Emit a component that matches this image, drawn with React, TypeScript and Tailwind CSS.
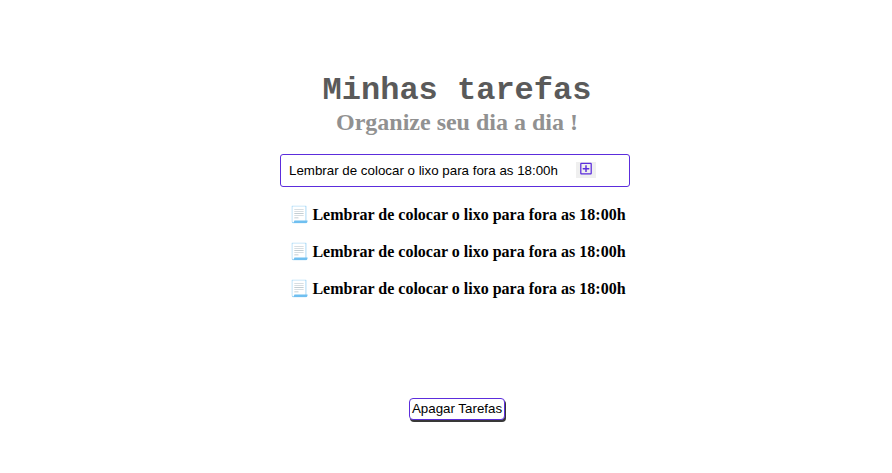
import { FaRegPlusSquare } from "react-icons/fa";

const task = "Lembrar de colocar o lixo para fora as 18:00h";

export default function App() {
  return (
    <div className="h-[473px] bg-white flex flex-col items-center pl-[22px] pt-[73px] font-['Liberation_Serif',serif] text-black">
      <h1 className="font-['Liberation_Mono',monospace] font-bold text-[32px] leading-[36px] text-[#5a5a5a]">Minhas tarefas</h1>
      <h2 className="font-bold text-[24px] leading-[27px] text-[#919191]">Organize seu dia a dia !</h2>
      <form className="mt-[18px] mr-1 flex h-[33px] w-[350px] items-center rounded-[3px] border border-[#5c2ddc] pl-2">
        <input className="w-[287px] font-['Liberation_Sans',sans-serif] text-[13.333px] leading-[15px] outline-none" defaultValue={task} />
        <button type="button" className="mb-px flex h-4 w-5 items-start bg-[#efefef] pl-[3px]">
          <FaRegPlusSquare className="h-[13.333px] w-[14px] text-[#5c2ddc]" />
        </button>
      </form>
      <ul className="mt-[19px] flex h-[192px] flex-col gap-[19px] text-[16px] leading-[18px] font-bold">
        {[0, 1, 2].map((i) => (
          <li key={i} className="flex gap-[3px] pl-px"><span className="font-['Noto_Color_Emoji']">📃</span><span>{task}</span></li>
        ))}
      </ul>
      <button className="h-[22px] w-24 rounded-[4px] border border-[#5c2ddc] bg-white pb-0.5 font-['Liberation_Sans',sans-serif] text-[13.333px] leading-[15px] shadow-[1px_2px_0_#383838]">Apagar Tarefas</button>
    </div>
  );
}
